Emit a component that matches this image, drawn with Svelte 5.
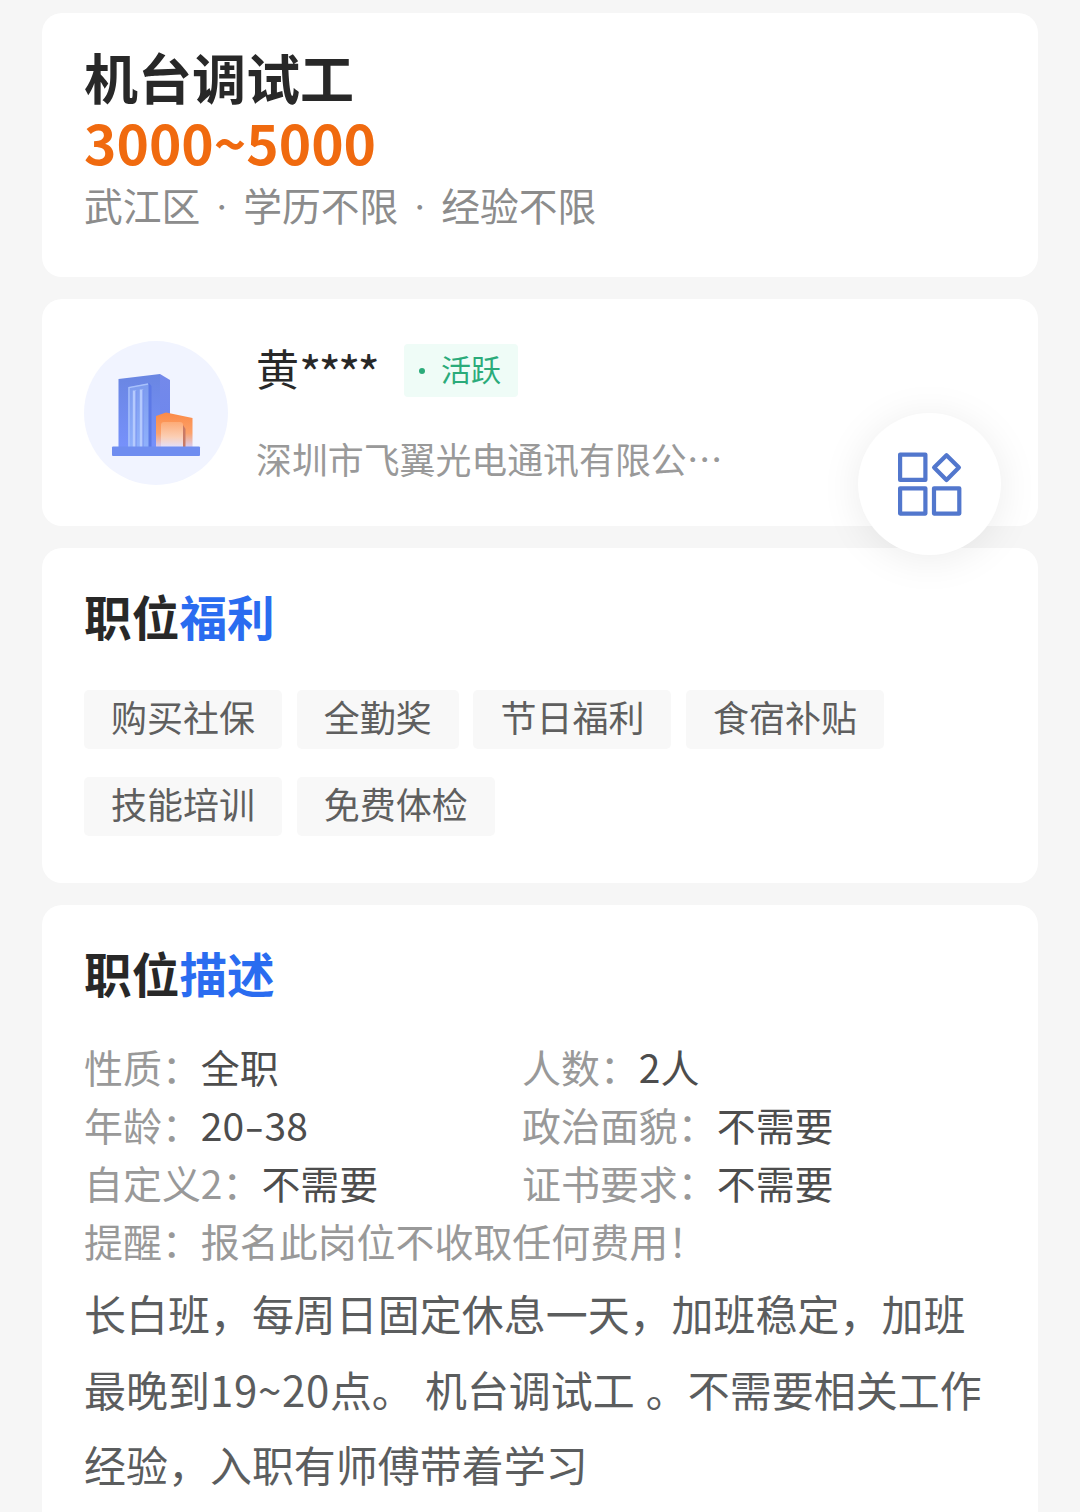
<script>
  const conditions = ['武江区', '学历不限', '经验不限'];
  const benefits = ['购买社保', '全勤奖', '节日福利', '食宿补贴', '技能培训', '免费体检'];
  const facts = [
    { label: '性质', value: '全职' },
    { label: '人数', value: '2人' },
    { label: '年龄', value: '20-38' },
    { label: '政治面貌', value: '不需要' },
    { label: '自定义2', value: '不需要' },
    { label: '证书要求', value: '不需要' },
    { label: '提醒', value: '报名此岗位不收取任何费用！', notice: true },
  ];
</script>

<main class="page">
  <section class="card summary">
    <h1>机台调试工</h1>
    <p class="salary">3000~5000</p>
    <p class="conditions">
      {#each conditions as item, i}
        {#if i > 0}<span class="sep">·</span>{/if}
        <span>{item}</span>
      {/each}
    </p>
  </section>

  <section class="card recruiter">
    <svg class="avatar" viewBox="0 0 144 144" aria-hidden="true">
      <defs>
        <linearGradient id="tower" x1="0" y1="0" x2="0" y2="1">
          <stop offset="0" stop-color="#6a86e2" />
          <stop offset="1" stop-color="#7691fb" />
        </linearGradient>
        <linearGradient id="side" x1="0" y1="0" x2="0" y2="1">
          <stop offset="0" stop-color="#7489ea" />
          <stop offset="1" stop-color="#6c86ee" />
        </linearGradient>
        <linearGradient id="panel" x1="0" y1="0" x2="0" y2="1">
          <stop offset="0" stop-color="#7d9bee" />
          <stop offset="1" stop-color="#8fb0fb" />
        </linearGradient>
        <linearGradient id="annex" x1="0" y1="0" x2="0" y2="1">
          <stop offset="0" stop-color="#fb8a47" />
          <stop offset="0.6" stop-color="#fca26c" />
          <stop offset="1" stop-color="#d9cdf0" />
        </linearGradient>
        <linearGradient id="door" x1="0" y1="0" x2="0" y2="1">
          <stop offset="0" stop-color="#fdab77" />
          <stop offset="0.6" stop-color="#fbcfb5" />
          <stop offset="1" stop-color="#e2e0fa" />
        </linearGradient>
      </defs>
      <circle cx="72" cy="72" r="72" fill="#f1f4ff" />
      <path d="M34.500 38L76 33V106H34.500Z" fill="url(#tower)" />
      <path d="M76 33L86 39V106H76Z" fill="url(#side)" />
      <path d="M44 46L65 42L67.500 45V106H62V48L44 50Z" fill="#5c79e6" />
      <path d="M44 46L64.500 42.500V106H44Z" fill="url(#panel)" />
      <path d="M45 106V46.500L64 43" fill="none" stroke="#a9c1fb" stroke-width="1.300" />
      <path d="M50.500 106V49.500M57.500 106V48.500" stroke="#b5cafd" stroke-width="3.400" />
      <path d="M52 106V50M59 106V49" stroke="#718cf0" stroke-width="1" />
      <path d="M72 75L82 71.500L108.500 77V106H72Z" fill="url(#annex)" />
      <path d="M77 106V84Q77 81 80 81H96Q99 81 99 84V106Z" fill="url(#door)" />
      <path d="M99 106V84L101.500 88V106Z" fill="#c97a65" />
      <rect x="28" y="105.500" width="88" height="9.500" rx="1" fill="#6f8df0" />
    </svg>
    <div class="who">
      <div class="name-row">
        <span class="name">黄<span class="mask">****</span></span>
        <span class="badge"><i class="dot"></i>活跃</span>
      </div>
      <p class="company">深圳市飞翼光电通讯有限公…</p>
    </div>
  </section>

  <section class="card benefits">
    <h2>职位<em>福利</em></h2>
    <ul class="tags">
      {#each benefits as tag}
        <li>{tag}</li>
      {/each}
    </ul>
  </section>

  <section class="card detail">
    <h2>职位<em>描述</em></h2>
    <dl class="facts">
      {#each facts as fact}
        <div class:notice={fact.notice}>
          <dt>{fact.label}：</dt>
          <dd>
            {#each fact.value.split('-') as part, i}{#if i > 0}<span class="dash">-</span>{/if}{part}{/each}
          </dd>
        </div>
      {/each}
    </dl>
    <p class="text">
      长白班，每周日固定休息一天，加班稳定，加班<br />最晚到<span class="num">19~20</span>点。 机台调试工 。不需要相关工作<br />经验，入职有师傅带着学习
    </p>
  </section>

  <button class="fab" aria-label="菜单">
    <svg viewBox="0 0 64 64" aria-hidden="true">
      <g fill="none" stroke="#5277cd" stroke-width="4.200" stroke-linejoin="round">
        <rect x="2.100" y="2.600" width="25.300" height="25.300" />
        <rect x="2.100" y="36.300" width="25.300" height="25.300" />
        <rect x="36" y="36.300" width="25.300" height="25.300" />
        <path d="M48.500 3.200L60.900 15.600L48.500 28L36.100 15.600Z" />
      </g>
    </svg>
  </button>
</main>

<style>
  :global(body) {
    margin: 0;
    background: #f6f6f6;
  }
  .page {
    position: relative;
    box-sizing: border-box;
    width: 1080px;
    height: 1512px;
    overflow: hidden;
    padding: 13px 42px 0;
    display: flex;
    flex-direction: column;
    gap: 22px;
    background: #f6f6f6;
    font-family: 'Noto Sans CJK SC', sans-serif;
    color: #282828;
  }
  h1, h2, p, ul, dl, dd {
    margin: 0;
    padding: 0;
  }
  .card {
    box-sizing: border-box;
    flex: none;
    padding: 32px 42px 0;
    border-radius: 20px;
    background: #fff;
    white-space: nowrap;
  }
  .summary {
    height: 264px;
    padding-top: 31px;
  }
  h1 {
    font-size: 54px;
    line-height: 66px;
    font-weight: 700;
  }
  .salary {
    padding-bottom: 2px;
    font-size: 55px;
    line-height: 62px;
    font-weight: 700;
    color: #f06a0f;
  }
  .conditions {
    display: flex;
    font-size: 38.800px;
    line-height: 60px;
    color: #8c8c8c;
  }
  .sep {
    width: 42.800px;
    text-align: center;
    font-size: 22px;
    line-height: 63px;
  }
  .recruiter {
    height: 227px;
    display: flex;
    gap: 28px;
    padding-top: 42px;
  }
  .avatar {
    flex: none;
    width: 144px;
    height: 144px;
  }
  .who {
    padding-top: 3px;
  }
  .name-row {
    display: flex;
    height: 53px;
  }
  .name {
    display: flex;
    width: 148px;
    font-size: 43px;
    line-height: 46px;
  }
  .mask {
    padding-top: 4px;
    font-size: 48px;
    letter-spacing: -2.900px;
  }
  .badge {
    display: flex;
    align-items: center;
    box-sizing: border-box;
    width: 114px;
    height: 53px;
    padding: 0 0 4px 15px;
    border-radius: 4px;
    background: #effcf7;
    color: #2bab7a;
    font-size: 30px;
    line-height: 49px;
  }
  .dot {
    width: 6px;
    height: 6px;
    margin: 5px 16px 0 0;
    border-radius: 50%;
    background: #2bab7a;
  }
  .company {
    margin-top: 36px;
    font-size: 35.900px;
    line-height: 50px;
    color: #999;
  }
  .benefits {
    height: 335px;
  }
  h2 {
    padding-top: 1px;
    font-size: 47.700px;
    line-height: 70px;
    font-weight: 700;
  }
  em {
    font-style: normal;
    color: #2a6cf0;
  }
  .tags {
    display: flex;
    flex-wrap: wrap;
    gap: 28px 14.700px;
    margin-top: 39px;
    list-style: none;
  }
  .tags li {
    height: 59px;
    padding: 0 27px;
    border-radius: 5px;
    background: #f8f8f8;
    color: #5f5f5f;
    font-size: 36px;
    line-height: 53px;
  }
  .detail {
    height: 660px;
  }
  .facts {
    display: grid;
    grid-template-columns: 438px 1fr;
    grid-auto-rows: 58px;
    margin-top: 29px;
    font-size: 38.950px;
    line-height: 58px;
  }
  .facts div {
    display: flex;
  }
  .facts .notice {
    grid-column: 1 / -1;
  }
  dt, .notice dd {
    color: #999;
  }
  dd {
    color: #4d4d4d;
  }
  .dash {
    display: inline-block;
    padding: 0 3.500px;
    transform: scaleX(1.450);
  }
  .text {
    margin-top: 6px;
    font-size: 41.970px;
    line-height: 75.500px;
    color: #5b5d5e;
    word-spacing: 1.700px;
  }
  .num {
    letter-spacing: 0.700px;
  }
  .fab {
    position: absolute;
    left: 858px;
    top: 413px;
    width: 143px;
    height: 142px;
    padding: 0;
    display: flex;
    align-items: center;
    justify-content: center;
    border: 0;
    border-radius: 50%;
    background: #fff;
    box-shadow: 0 4px 40px rgba(0, 0, 0, 0.08);
  }
  .fab svg {
    width: 64px;
    height: 64px;
  }
</style>
